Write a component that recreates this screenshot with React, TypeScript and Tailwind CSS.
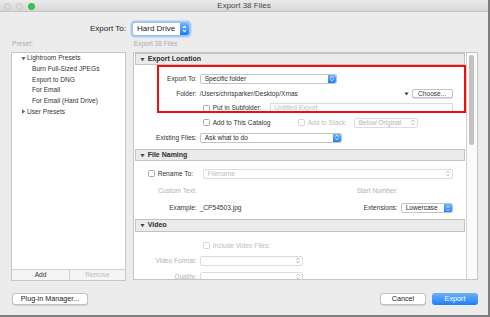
import React from 'react';

const Stepper = ({ blue = false }: { blue?: boolean }) =>
  blue ? (
    <span className="flex h-full w-[8px] items-center justify-center rounded-r-[2px] bg-gradient-to-b from-[#6cb2fb] to-[#1b7ef6]">
      <svg width="4" height="7" viewBox="0 0 4 7" fill="none" stroke="#fff" strokeWidth="0.9">
        <path d="M0.6 2.6 L2 1.2 L3.4 2.6" />
        <path d="M0.6 4.4 L2 5.8 L3.4 4.4" />
      </svg>
    </span>
  ) : (
    <span className="flex h-full w-[8px] items-center justify-center">
      <svg width="4" height="7" viewBox="0 0 4 7" fill="none" stroke="#9a9a9a" strokeWidth="0.8">
        <path d="M0.6 2.6 L2 1.2 L3.4 2.6" />
        <path d="M0.6 4.4 L2 5.8 L3.4 4.4" />
      </svg>
    </span>
  );

const Checkbox = ({ disabled = false }: { disabled?: boolean }) => (
  <span
    className={`inline-block h-[7px] w-[7px] shrink-0 rounded-[1.5px] border bg-white ${
      disabled ? 'border-[#d4d4d4]' : 'border-[#a8a8a8]'
    }`}
  />
);

const Select = ({
  value,
  width,
  blue = false,
  disabled = false,
}: {
  value?: string;
  width: string;
  blue?: boolean;
  disabled?: boolean;
}) => (
  <div
    className={`flex h-[10px] items-center rounded-[2px] border bg-white ${width} ${
      disabled ? 'border-[#dcdcdc]' : 'border-[#c4c4c4]'
    }`}
  >
    <span className={`flex-1 truncate pl-[4px] ${disabled ? 'text-[#b4b4b4]' : 'text-[#2a2a2a]'}`}>{value}</span>
    <Stepper blue={blue} />
  </div>
);

const Triangle = ({ open = true, color = '#555' }: { open?: boolean; color?: string }) => (
  <svg width="5" height="5" viewBox="0 0 5 5" className="shrink-0">
    {open ? <path d="M0.3 1 L4.7 1 L2.5 4.2 Z" fill={color} /> : <path d="M1 0.3 L4.2 2.5 L1 4.7 Z" fill={color} />}
  </svg>
);

const SectionHeader = ({ title, h }: { title: string; h: string }) => (
  <div className={`mx-[1px] flex items-center gap-[3px] border border-[#c3c3c3] bg-[#ebebeb] pl-[4px] ${h}`}>
    <Triangle color="#4a4a4a" />
    <span className="text-[7px] font-bold text-[#2b2b2b]">{title}</span>
  </div>
);

const Label = ({ children, muted = false }: { children: React.ReactNode; muted?: boolean }) => (
  <span className={`w-[66px] shrink-0 pr-[3px] text-right ${muted ? 'text-[#b2b2b2]' : 'text-[#333]'}`}>{children}</span>
);

const presets = ['Burn Full-Sized JPEGs', 'Export to DNG', 'For Email', 'For Email (Hard Drive)'];

export default function App() {
  return (
    <div className="h-[317px] w-[490px] bg-[#7d7d7d] font-['Liberation_Sans',Arial,sans-serif]">
      <div className="flex h-[315px] w-[488px] flex-col bg-[#ececec]">
        {/* Title bar */}
        <div className="relative flex h-[12px] items-center justify-center border-b border-[#c4c4c4] bg-gradient-to-b from-[#ebebeb] to-[#d6d6d6]">
          <div className="absolute left-[4px] top-[2.5px] flex gap-[5px]">
            <span className="h-[7px] w-[7px] rounded-full border border-[#c6c6c6] bg-[#dcdcdc]" />
            <span className="h-[7px] w-[7px] rounded-full border border-[#c6c6c6] bg-[#dcdcdc]" />
            <span className="h-[7px] w-[7px] rounded-full border border-[#2aa83a] bg-[#35c94a]" />
          </div>
          <span className="text-[8px] text-[#4a4a4a]">Export 38 Files</span>
        </div>

        {/* Export To */}
        <div className="mt-[10px] flex h-[14px] items-center pl-[90px] text-[8px]">
          <span className="w-[37px] text-[#222]">Export To:</span>
          <div className="ml-[5px] flex h-[14px] w-[58px] items-center rounded-[3px] border border-[#9fbff0] bg-white shadow-[0_0_0_1.5px_#a8cbf6]">
            <span className="flex-1 pl-[4px] text-[#222]">Hard Drive</span>
            <span className="flex h-full w-[9px] items-center justify-center rounded-r-[2px] bg-gradient-to-b from-[#6cb2fb] to-[#1b7ef6]">
              <svg width="5" height="8" viewBox="0 0 4 7" fill="none" stroke="#fff" strokeWidth="0.9">
                <path d="M0.6 2.6 L2 1.2 L3.4 2.6" />
                <path d="M0.6 4.4 L2 5.8 L3.4 4.4" />
              </svg>
            </span>
          </div>
        </div>

        {/* Main */}
        <div className="mt-[4px] flex gap-[6.7px] pl-[11px] text-[6.6px]">
          {/* Presets */}
          <div className="flex w-[115px] flex-col">
            <span className="h-[12px] pl-[1px] leading-[8px] text-[#acacac]">Preset:</span>
            <div className="flex h-[229px] flex-col border border-[#c6c6c6] bg-white">
              <div className="flex flex-1 flex-col text-[#333]">
                <div className="flex h-[10.7px] items-center gap-[1px] pl-[9px]">
                  <Triangle color="#666" />
                  <span>Lightroom Presets</span>
                </div>
                {presets.map((p) => (
                  <div key={p} className="flex h-[10.7px] items-center pl-[20px]">
                    {p}
                  </div>
                ))}
                <div className="flex h-[10.7px] items-center gap-[1px] pl-[9px]">
                  <Triangle open={false} color="#666" />
                  <span>User Presets</span>
                </div>
              </div>
              <div className="flex h-[11px] border-t border-[#d2d2d2] bg-[#f5f5f5]">
                <span className="flex w-[58px] items-center justify-center border-r border-[#d2d2d2] text-[#333]">Add</span>
                <span className="flex flex-1 items-center justify-center text-[#bdbdbd]">Remove</span>
              </div>
            </div>
          </div>

          {/* Export settings */}
          <div className="flex w-[345px] flex-col">
            <span className="h-[12px] pl-[1px] leading-[8px] text-[#acacac]">Export 38 Files</span>
            <div className="relative flex h-[228px] overflow-hidden border border-[#c6c6c6] bg-white">
              <div className="flex flex-1 flex-col border-r border-[#d0d0d0]">
                <SectionHeader title="Export Location" h="h-[12px]" />
                <div className="flex flex-col pb-[4px] pr-[13px] pt-[6px]">
                  <div className="flex h-[15px] items-center">
                    <Label>Export To:</Label>
                    <Select value="Specific folder" width="w-[137px]" blue />
                  </div>
                  <div className="flex h-[15px] items-center">
                    <Label>Folder:</Label>
                    <span className="flex-1 text-[#333]">/Users/chrisparker/Desktop/Xmas</span>
                    <svg width="5" height="4" viewBox="0 0 5 4" className="mr-[3px]">
                      <path d="M0.5 0.5 L4.5 0.5 L2.5 3.5 Z" fill="#333" />
                    </svg>
                    <span className="flex h-[9px] w-[41px] items-center justify-center rounded-[2px] border border-[#c4c4c4] bg-white text-[#333] shadow-[0_0.5px_0_#c0c0c0]">
                      Choose...
                    </span>
                  </div>
                  <div className="flex h-[14px] items-center">
                    <span className="w-[69px] shrink-0" />
                    <Checkbox />
                    <span className="ml-[3px] text-[#333]">Put in Subfolder:</span>
                    <span className="ml-[9px] flex h-[10px] flex-1 items-center border border-[#dcdcdc] pl-[3px] text-[#bcbcbc]">
                      Untitled Export
                    </span>
                  </div>
                  <div className="flex h-[15px] items-center">
                    <span className="w-[69px] shrink-0" />
                    <Checkbox />
                    <span className="ml-[3px] w-[85px] text-[#333]">Add to This Catalog</span>
                    <Checkbox disabled />
                    <span className="ml-[3px] w-[46px] text-[#bdbdbd]">Add to Stack:</span>
                    <Select value="Below Original" width="w-[64px]" disabled />
                  </div>
                  <div className="flex h-[15px] items-center">
                    <Label>Existing Files:</Label>
                    <Select value="Ask what to do" width="w-[142px]" blue />
                  </div>
                </div>

                <SectionHeader title="File Naming" h="h-[12px]" />
                <div className="flex flex-col pb-[3px] pr-[13px] pt-[5px]">
                  <div className="flex h-[15px] items-center">
                    <span className="w-[14px] shrink-0" />
                    <Checkbox />
                    <span className="ml-[3px] w-[45px] text-[#333]">Rename To:</span>
                    <div className="flex h-[10px] flex-1 items-center rounded-[2px] border border-[#dcdcdc] bg-white">
                      <span className="flex-1 pl-[4px] text-[#bcbcbc]">Filename</span>
                      <Stepper />
                    </div>
                  </div>
                  <div className="flex h-[19px] items-center">
                    <Label muted>Custom Text:</Label>
                    <span className="flex-1" />
                    <span className="mr-[3px] text-[#b2b2b2]">Start Number:</span>
                    <span className="w-[52px]" />
                  </div>
                  <div className="flex h-[16px] items-center">
                    <Label>Example:</Label>
                    <span className="flex-1 text-[#333]">_CP54503.jpg</span>
                    <span className="mr-[3px] text-[#333]">Extensions:</span>
                    <Select value="Lowercase" width="w-[52px]" blue />
                  </div>
                </div>

                <SectionHeader title="Video" h="h-[13px]" />
                <div className="flex flex-col pr-[13px] pt-[7px]">
                  <div className="flex h-[14px] items-center">
                    <span className="w-[69px] shrink-0" />
                    <Checkbox disabled />
                    <span className="ml-[3px] text-[#bdbdbd]">Include Video Files:</span>
                  </div>
                  <div className="flex h-[16px] items-center">
                    <Label muted>Video Format:</Label>
                    <Select width="w-[103px]" disabled />
                  </div>
                  <div className="flex h-[16px] items-center">
                    <Label muted>Quality:</Label>
                    <Select width="w-[103px]" disabled />
                  </div>
                </div>
              </div>

              {/* Scrollbar */}
              <div className="flex w-[10px] justify-center bg-[#fafafa] pt-[2px]">
                <span className="h-[90px] w-[5px] rounded-full bg-[#c2c2c2]" />
              </div>

              {/* Annotation */}
              <div className="absolute left-[23px] top-[12px] h-[48px] w-[309px] border-2 border-[#f20d0d]" />
            </div>
          </div>
        </div>

        {/* Bottom buttons */}
        <div className="mt-[12px] flex items-center pl-[12px] pr-[10px] text-[7.2px]">
          <span className="flex h-[12px] w-[76px] items-center justify-center rounded-[3px] border border-[#c4c4c4] bg-white text-[#222] shadow-[0_0.5px_0_#b8b8b8]">
            Plug-in Manager...
          </span>
          <span className="flex-1" />
          <span className="flex h-[12px] w-[46px] items-center justify-center rounded-[3px] border border-[#c4c4c4] bg-white text-[#222] shadow-[0_0.5px_0_#b8b8b8]">
            Cancel
          </span>
          <span className="ml-[6px] flex h-[12px] w-[46px] items-center justify-center rounded-[3px] bg-gradient-to-b from-[#69b1fa] to-[#1c7ff5] text-white">
            Export
          </span>
        </div>
      </div>
    </div>
  );
}
